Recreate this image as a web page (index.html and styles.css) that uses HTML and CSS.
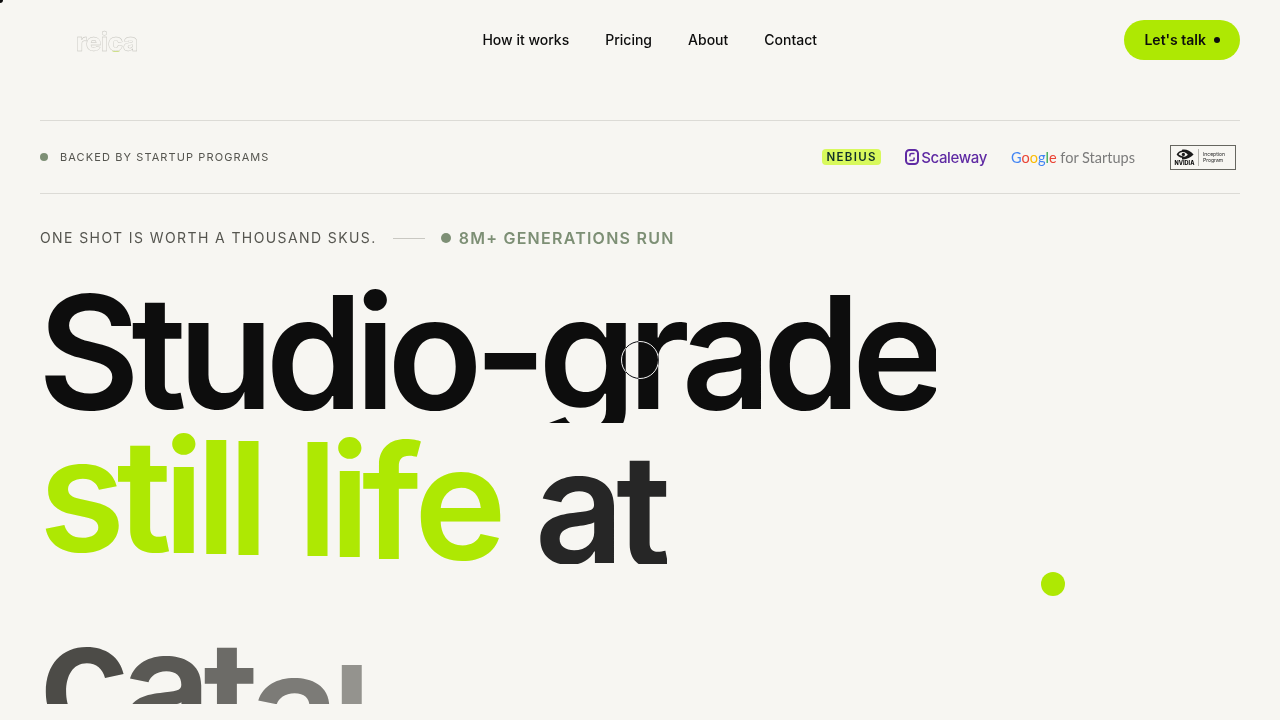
FILE: index.html
```html
<!DOCTYPE html>
<html lang="en">
<head>
    <meta charset="UTF-8">
    <meta name="viewport" content="width=device-width, initial-scale=1.0">
    <title>Reica</title>
    <link rel="stylesheet" href="styles.css">
</head>
<body>
    <div class="cursor-dot"></div>
    <div class="cursor-ring"></div>
    <div class="float-dot"></div>

    <nav class="nav">
        <div class="logo-box"><a class="logo" href="#">reica<span class="logo-arc"></span></a></div>
        <div class="nav-links">
            <a href="#">How it works</a>
            <a href="#">Pricing</a>
            <a href="#">About</a>
            <a href="#">Contact</a>
        </div>
        <a class="talk" href="#"><span class="talk-text">Let's talk</span> <span class="talk-dot"></span></a>
    </nav>

    <section class="backed">
        <div class="backed-label"><span class="dot"></span>BACKED BY STARTUP PROGRAMS</div>
        <div class="backers">
            <span class="nebius">NEBIUS</span>
            <span class="scaleway">
                <svg width="14" height="16" viewBox="0 0 14 16" fill="none" stroke="#5f2aa3" stroke-width="2">
                    <rect x="1" y="1" width="12" height="14" rx="3.5"/>
                    <path d="M9.5 4.5H6.5a1.6 1.6 0 0 0-1.6 1.6v1.4M4.5 11.5h3a1.6 1.6 0 0 0 1.6-1.6V8.5" stroke-width="1.5"/>
                </svg>
                Scaleway
            </span>
            <span class="google"><span class="g-blue">G</span><span class="g-red">o</span><span class="g-yellow">o</span><span class="g-blue">g</span><span class="g-green">l</span><span class="g-red">e</span> <span class="g-rest">for Startups</span></span>
            <span class="nvidia">
                <span class="nvidia-mark">
                    <svg width="18" height="11" viewBox="0 0 18 11">
                        <path d="M6 0.8C10 0 14 1.6 17.6 5.6 14.4 9 10.4 10.8 6 10.4V8.8C4 8.4 1.8 7 0.6 5.4 1.8 3.2 3.8 1.8 6 1.5Z" fill="#1a1a1a"/>
                        <path d="M2.6 5.3C3.6 3.9 5.4 3 7.2 3.1 9.2 3.3 10.8 4.4 11.8 5.8 10.8 6.8 9.6 7.6 8.4 7.8 6.2 7.4 4.2 6.6 2.6 5.3Z" fill="#f7f6f2"/>
                        <circle cx="7.4" cy="5.4" r="1.6" fill="#1a1a1a"/>
                    </svg>
                    <span class="nvidia-word">NVIDIA</span>
                </span>
                <span class="nvidia-text">Inception<br>Program</span>
            </span>
        </div>
    </section>

    <main class="hero">
        <div class="tagline">
            <span class="shot">ONE SHOT IS WORTH A THOUSAND SKUS.</span>
            <span class="tag-line"></span>
            <span class="dot dot-big"></span>
            <span class="runs">8M+ GENERATIONS RUN</span>
        </div>
        <h1 class="headline">
            <span class="line"><span class="ch">S</span><span class="ch">t</span><span class="ch">u</span><span class="ch">d</span><span class="ch">i</span><span class="ch">o</span><span class="ch">-</span><span class="ch">g</span><span class="ch">r</span><span class="ch">a</span><span class="ch">d</span><span class="ch">e</span></span>
            <span class="line line-mid"><span class="ch">s</span><span class="ch">t</span><span class="ch">i</span><span class="ch">l</span><span class="ch">l</span> <span class="ch">l</span><span class="ch">i</span><span class="ch">f</span><span class="ch">e</span> <span class="ch">a</span><span class="ch">t</span></span>
            <span class="line line-last"><span class="ch">c</span><span class="ch">a</span><span class="ch">t</span><span class="ch">a</span><span class="ch">l</span></span>
        </h1>
    </main>
</body>
</html>
```

FILE: styles.css
```css
* {
    box-sizing: border-box;
}

html, body {
    height: 100%;
}

body {
    margin: 0;
    background-color: #f7f6f2;
    color: #0d0d0d;
    font-family: "Inter", "Liberation Sans", sans-serif;
    overflow: hidden;
}

a {
    color: inherit;
    text-decoration: none;
}

.cursor-dot {
    position: absolute;
    left: -3px;
    top: -3px;
    width: 6px;
    height: 6px;
    border-radius: 50%;
    background-color: #0d0d0d;
}

.cursor-ring {
    position: absolute;
    left: 621px;
    top: 341px;
    width: 38px;
    height: 38px;
    border: 1px solid #fff;
    border-radius: 50%;
    mix-blend-mode: difference;
    z-index: 5;
}

.float-dot {
    position: absolute;
    left: 1041px;
    top: 572px;
    width: 24px;
    height: 24px;
    border-radius: 50%;
    background-color: #aee803;
}

.nav {
    display: flex;
    align-items: center;
    justify-content: space-between;
    height: 80px;
    padding: 0 40px;
}

.logo-box {
    width: 135px;
    padding-left: 36px;
    padding-top: 3px;
}

.logo {
    position: relative;
    font-size: 26px;
    font-weight: 800;
    letter-spacing: -0.5px;
    color: transparent;
    -webkit-text-stroke: 0.4px #c4c3bd;
}

.logo-arc {
    position: absolute;
    left: 36px;
    bottom: 5px;
    width: 8px;
    height: 2px;
    border-bottom: 1px solid #cfe08a;
    border-radius: 0 0 4px 4px;
}

.nav-links {
    display: flex;
    gap: 36px;
    margin-bottom: 2px;
    font-size: 14px;
    font-weight: 500;
}

.talk {
    display: flex;
    align-items: center;
    gap: 8px;
    height: 40px;
    padding: 0 20px;
    border-radius: 20px;
    background-color: #aee803;
    font-size: 14px;
    font-weight: 600;
}

.talk-text {
    margin-bottom: 2px;
}

.talk-dot {
    width: 6px;
    height: 6px;
    border-radius: 50%;
    background-color: #0d0d0d;
}

.backed {
    display: flex;
    align-items: center;
    justify-content: space-between;
    height: 74px;
    margin: 40px 40px 0;
    border-top: 1px solid #dcdbd6;
    border-bottom: 1px solid #dcdbd6;
}

.backed-label {
    display: flex;
    align-items: center;
    gap: 12px;
    font-size: 11px;
    letter-spacing: 1.1px;
    color: #55554f;
}

.dot {
    display: inline-block;
    width: 8px;
    height: 8px;
    border-radius: 50%;
    background-color: #7d8f75;
}

.backers {
    display: flex;
    align-items: center;
    gap: 24px;
    padding-right: 4px;
}

.nebius {
    width: 59px;
    height: 16px;
    border-radius: 4px;
    background-color: #d8f95c;
    font-size: 11.5px;
    font-weight: 600;
    letter-spacing: 1.3px;
    line-height: 16px;
    text-align: center;
    color: #10302a;
}

.scaleway {
    display: flex;
    align-items: center;
    gap: 2px;
    font-size: 15px;
    font-weight: 500;
    letter-spacing: -0.35px;
    color: #5f2aa3;
}

.google {
    margin-right: 11px;
    font-family: "Lato", sans-serif;
    font-size: 14.5px;
}

.g-blue { color: #4285f4; }
.g-red { color: #ea4335; }
.g-yellow { color: #fbbc05; }
.g-green { color: #34a853; }
.g-rest { color: #7b7b7b; }

.nvidia {
    display: flex;
    align-items: stretch;
    width: 66px;
    height: 25px;
    border: 1px solid #666660;
}

.nvidia-mark {
    display: flex;
    flex-direction: column;
    align-items: center;
    justify-content: center;
    gap: 1px;
    width: 28px;
    margin: 3px 0;
    border-right: 1px solid #b5b4ae;
}

.nvidia-word {
    font-size: 5.5px;
    font-weight: 800;
    line-height: 5px;
}

.nvidia-text {
    display: flex;
    align-items: center;
    padding-left: 4px;
    font-size: 5px;
    line-height: 6px;
    color: #222;
}

.hero {
    padding: 0 40px;
}

.tagline {
    display: flex;
    align-items: center;
    height: 20px;
    margin-top: 34px;
    font-size: 14px;
    letter-spacing: 1.4px;
    color: #55554f;
}

.shot {
    margin-bottom: 2px;
}

.tag-line {
    width: 32px;
    height: 1px;
    margin: 0 16px;
    background-color: #c9c8c2;
}

.dot-big {
    width: 10px;
    height: 10px;
}

.runs {
    margin-left: 8px;
    font-size: 16px;
    font-weight: 600;
    letter-spacing: 1.25px;
    color: #7d8f75;
}

.headline {
    margin: 34px 0 0;
    font-size: 156.8px;
    font-weight: 600;
    letter-spacing: -0.055em;
    line-height: 0.9;
}

/* each line clips its letters, that is the reveal */
.line {
    display: block;
    width: fit-content;
    height: 141px;
    margin-left: -2px;
    overflow: hidden;
    white-space: nowrap;
}

.ch {
    display: inline-block;
}

.line-mid {
    margin-left: -1px;
    padding-right: 4px;
    word-spacing: 5.5px;
}

.line-last {
    height: 140px;
    margin-left: -1px;
}

.line-mid .ch:nth-child(-n+9) {
    color: #aee803;
}

.line-mid .ch:nth-child(1) { transform: translateY(1px); }
.line-mid .ch:nth-child(2) { transform: translateY(2px); }
.line-mid .ch:nth-child(3) { transform: translateY(3px); }
.line-mid .ch:nth-child(4) { transform: translateY(3.5px); }
.line-mid .ch:nth-child(5) { transform: translateY(4.5px); }
.line-mid .ch:nth-child(6) { transform: translateY(5.5px); }
.line-mid .ch:nth-child(7) { transform: translateY(6.5px); }
.line-mid .ch:nth-child(8) { transform: translateY(8.5px); }
.line-mid .ch:nth-child(9) { transform: translateY(9px); }
.line-mid .ch:nth-child(10) { color: #262626; transform: translateY(13px); }
.line-mid .ch:nth-child(11) { color: #262626; transform: translateY(17px); }

.line-last .ch:nth-child(1) { color: #4c4b47; transform: translateY(43px); }
.line-last .ch:nth-child(2) { color: #5a5955; transform: translateY(52px); }
.line-last .ch:nth-child(3) { color: #6c6b67; transform: translateY(63px); }
.line-last .ch:nth-child(4) { color: #7c7b77; transform: translateY(74px); }
.line-last .ch:nth-child(5) { color: #94938e; transform: translateY(88px); }
```
